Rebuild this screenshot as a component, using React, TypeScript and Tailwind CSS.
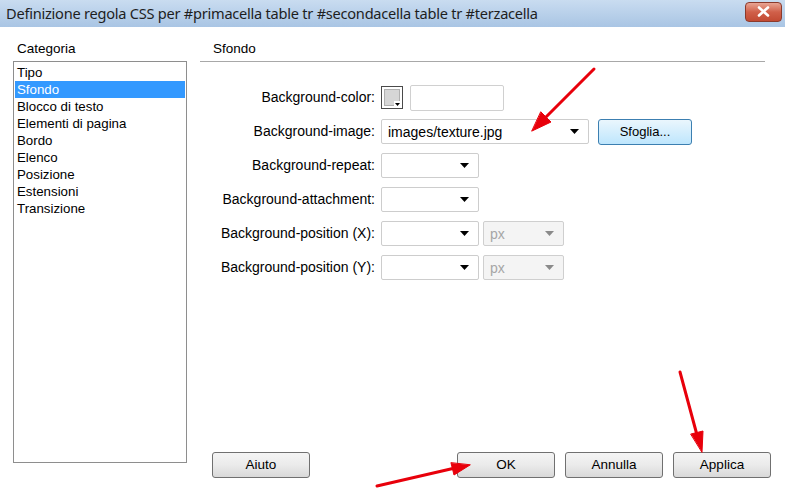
import React from "react";

const Tri = ({ gray = false }: { gray?: boolean }) => (
  <svg width="9" height="5" viewBox="0 0 9 5" className="shrink-0">
    <polygon points="0,0 9,0 4.5,5" fill={gray ? "#8a8a8a" : "#000"} />
  </svg>
);

const Select = ({ w, text, disabled = false }: { w: string; text?: string; disabled?: boolean }) => (
  <div
    className={`${w} h-[25px] flex items-center justify-between pl-[6px] pr-[9px] rounded-[2px] border text-[14px] ${
      disabled ? "bg-[#f4f4f4] border-[#cfcfcf] text-[#a6a6a6]" : "bg-white border-[#cdcdcd] text-black"
    }`}
  >
    <span className="leading-none">{text ?? ""}</span>
    <Tri gray={disabled} />
  </div>
);

const Btn = ({ label, blue = false, w = "w-[98px]" }: { label: string; blue?: boolean; w?: string }) => (
  <div
    className={`${w} h-[26px] flex items-center justify-center rounded-[3px] border ${
      blue
        ? "border-[#3c7fb1] bg-gradient-to-b from-[#eaf6fd] to-[#bee6fd]"
        : "border-[#707070] bg-gradient-to-b from-[#f4f4f4] via-[#ebebeb] to-[#d9d9d9]"
    }`}
  >
    {label}
  </div>
);

export default function App() {
  const cats = ["Tipo", "Sfondo", "Blocco di testo", "Elementi di pagina", "Bordo", "Elenco", "Posizione", "Estensioni", "Transizione"];
  const rows: { label: string; ctrl: React.ReactNode }[] = [
    {
      label: "Background-color:",
      ctrl: (
        <div className="flex items-center gap-[7px]">
          <div className="relative w-[22px] h-[23px] border border-[#4a4a4a] bg-white p-[2px]">
            <div className="w-full h-full bg-[#d6d6d6] border border-[#b0b0b0]" />
            <div className="absolute right-[1px] bottom-[1px] w-[7px] h-[6px] bg-white flex items-center justify-center">
              <svg width="5" height="3" viewBox="0 0 5 3"><polygon points="0,0 5,0 2.5,3" fill="#000" /></svg>
            </div>
          </div>
          <div className="w-[94px] h-[26px] border border-[#d0d0d0] rounded-[2px] bg-white" />
        </div>
      ),
    },
    {
      label: "Background-image:",
      ctrl: (
        <div className="flex items-center gap-[9px]">
          <Select w="w-[208px]" text="images/texture.jpg" />
          <Btn label="Sfoglia..." blue w="w-[94px]" />
        </div>
      ),
    },
    { label: "Background-repeat:", ctrl: <Select w="w-[98px]" /> },
    { label: "Background-attachment:", ctrl: <Select w="w-[98px]" /> },
    {
      label: "Background-position (X):",
      ctrl: (
        <div className="flex items-center gap-[4px]">
          <Select w="w-[98px]" />
          <Select w="w-[81px]" text="px" disabled />
        </div>
      ),
    },
    {
      label: "Background-position (Y):",
      ctrl: (
        <div className="flex items-center gap-[4px]">
          <Select w="w-[98px]" />
          <Select w="w-[81px]" text="px" disabled />
        </div>
      ),
    },
  ];

  return (
    <div className="relative w-[785px] h-[490px] overflow-hidden bg-white text-[13px] text-black font-['Liberation_Sans',Arial,sans-serif]">
      {/* Title bar */}
      <div className="h-[27px] flex items-center justify-between pl-[6px] pr-[3px] bg-gradient-to-b from-[#c9dcf0] to-[#a9c5e4]">
        <span className="text-[14.6px] text-[#1e1e1e] font-['Noto_Sans',sans-serif] tracking-[-0.25px]">
          Definizione regola CSS per #primacella table tr #secondacella table tr #terzacella
        </span>
        <div className="w-[37px] h-[20px] -mt-[4px] rounded-[4px] border border-[#8b3a2c] bg-gradient-to-b from-[#e8a493] via-[#d0604a] to-[#c24a33] flex items-center justify-center">
          <svg width="13" height="11" viewBox="0 0 13 11">
            <path d="M2 1.5 L11 9.5 M11 1.5 L2 9.5" stroke="#fff" strokeWidth="2.6" strokeLinecap="round" />
          </svg>
        </div>
      </div>

      {/* Body */}
      <div className="flex pt-[14px]">
        {/* Left column */}
        <div className="ml-[13px] w-[174px] flex flex-col">
          <div className="pl-[4px] h-[16px] leading-[16px] text-[13.5px]">Categoria</div>
          <div className="mt-[4px] h-[402px] border border-[#8e8e8e] px-[1px] pt-[2px] text-[13.3px]">
            {cats.map((c) => (
              <div
                key={c}
                className={`h-[17px] leading-[17px] pl-[2px] ${c === "Sfondo" ? "bg-[#3399ff] text-white" : ""}`}
              >
                {c}
              </div>
            ))}
          </div>
        </div>

        {/* Right column */}
        <div className="ml-[13px] flex-1 flex flex-col">
          <div className="pl-[13px] h-[16px] leading-[16px] text-[13.5px]">Sfondo</div>
          <div className="mt-[4px] w-[565px] h-px bg-[#a8a8a8]" />
          <div className="mt-[23px] flex flex-col gap-[9px]">
            {rows.map((r) => (
              <div key={r.label} className="flex items-center h-[25px]">
                <div className="w-[175px] text-right text-[14px]">{r.label}</div>
                <div className="ml-[6px]">{r.ctrl}</div>
              </div>
            ))}
          </div>
          <div className="mt-[172px] flex items-center pl-[12px] text-[13.5px]">
            <Btn label="Aiuto" />
            <div className="flex-1" />
            <div className="flex items-center gap-[10px] mr-[14px]">
              <Btn label="OK" />
              <Btn label="Annulla" />
              <Btn label="Applica" />
            </div>
          </div>
        </div>
      </div>

      {/* Annotation arrows */}
      <svg className="absolute inset-0 pointer-events-none" width="785" height="490" viewBox="0 0 785 490">
        <g stroke="#e8000b" strokeWidth="3" strokeLinecap="round" fill="#e8000b">
          <line x1="594" y1="69" x2="543" y2="120" />
          <polygon points="532,131 551,122 541,112" strokeWidth="1" />
          <line x1="377" y1="486" x2="455" y2="468" />
          <polygon points="470,465 454,475 451,463" strokeWidth="1" />
          <line x1="680" y1="372" x2="697" y2="435" />
          <polygon points="702,452 703,431 691,434" strokeWidth="1" />
        </g>
      </svg>
    </div>
  );
}
